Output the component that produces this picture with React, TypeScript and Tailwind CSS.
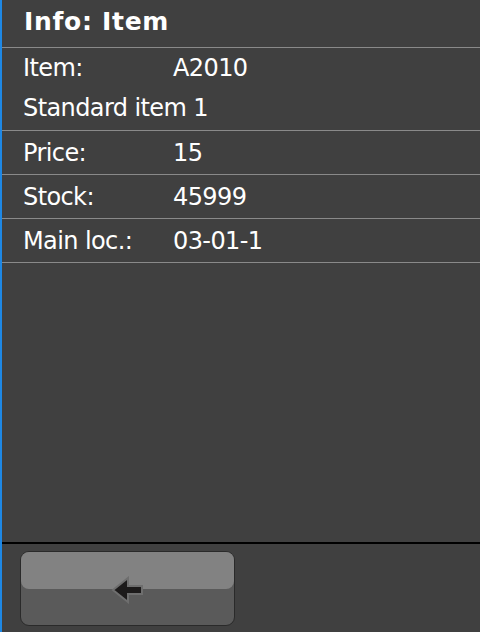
import React from "react";

const rows: { label: string; value: string }[] = [
  { label: "Price:", value: "15" },
  { label: "Stock:", value: "45999" },
  { label: "Main loc.:", value: "03-01-1" },
];

export default function App() {
  return (
    <div
      className="w-[480px] h-[632px] bg-[#404040] border-l-2 border-[#1e88e5] flex flex-col text-white overflow-hidden"
      style={{ fontFamily: '"DejaVu Sans", Verdana, sans-serif' }}
    >
      <div className="h-[48px] border-b border-[#8a8a8a] flex items-center pl-[22px] text-[25px] font-bold tracking-[0.7px] pb-[3px]">
        Info: Item
      </div>
      <div className="h-[83px] border-b border-[#8a8a8a] flex flex-col pl-[21px] text-[24px] tracking-[-0.6px]">
        <div className="h-[40px] flex items-center">
          <span className="w-[150px]">Item:</span>
          <span>A2010</span>
        </div>
        <div className="h-[40px] flex items-center">Standard item 1</div>
      </div>
      {rows.map((r) => (
        <div
          key={r.label}
          className="h-[44px] border-b border-[#8a8a8a] flex items-center pl-[21px] text-[24px] tracking-[-0.6px]"
        >
          <span className="w-[150px]">{r.label}</span>
          <span>{r.value}</span>
        </div>
      ))}
      <div className="flex-1" />
      <div className="h-[90px] border-t-2 border-black pt-[7px] pl-[18px]">
        <button className="w-[215px] h-[75px] rounded-[9px] border border-[#2a2a2a] bg-[#5a5a5a] overflow-hidden relative flex flex-col">
          <div className="h-[37px] w-full bg-[#828282] rounded-b-[8px]" />
          <svg
            className="absolute left-[90px] top-[24px]"
            width="34"
            height="28"
            viewBox="0 0 34 28"
          >
            <path
              d="M2 14 L17 2 L17 10 L31 10 L31 18 L17 18 L17 26 Z"
              fill="#1c1a1a"
              stroke="#6e6e6e"
              strokeWidth="2"
              strokeLinejoin="miter"
            />
          </svg>
        </button>
      </div>
    </div>
  );
}
